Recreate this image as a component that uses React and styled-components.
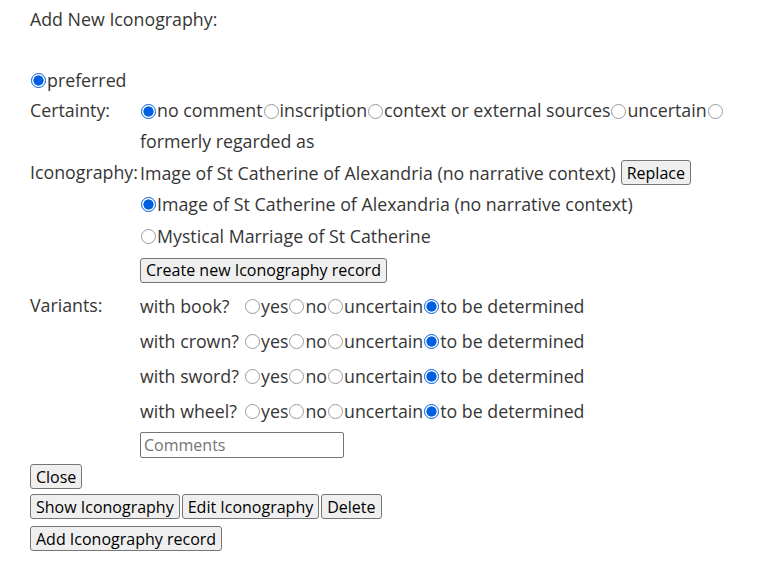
import React from 'react';
import styled, { createGlobalStyle } from 'styled-components';

const GlobalStyle = createGlobalStyle`
  body {
    margin: 0;
    background: #fff;
    font-family: 'Open Sans', 'Noto Sans', sans-serif;
    color: #363636;
  }
`;

const Page = styled.div`
  padding: 4px 0 0 30px;
  font-size: 17.8px;
`;

const Title = styled.div`
  line-height: 30px;
  margin-bottom: 30px;
`;

const Line = styled.div`
  display: flex;
  align-items: center;
  height: ${(p) => p.h || 31}px;
  white-space: nowrap;
`;

const Row = styled.div`
  display: flex;
  align-items: flex-start;
`;

const Label = styled.div`
  width: 110px;
  flex: none;
  line-height: ${(p) => p.h || 31}px;
`;

const Body = styled.div`
  display: flex;
  flex-direction: column;
`;

const Wrap = styled.div`
  display: flex;
  flex-wrap: wrap;
  align-items: center;
  line-height: 31px;
  max-width: 595px;
`;

const Option = styled.label`
  display: inline-flex;
  align-items: center;
  white-space: nowrap;
`;

const Radio = styled.input.attrs({ type: 'radio' })`
  appearance: none;
  -webkit-appearance: none;
  box-sizing: border-box;
  display: inline-block;
  width: 15px;
  height: 15px;
  min-width: 15px;
  margin: 1px 1px 0 1px;
  border-radius: 50%;
  border: 1px solid #9a9a9a;
  background: #fff;
  flex: none;
  &:checked {
    border: 1.5px solid #0060df;
    background: radial-gradient(circle, #0060df 0 4.8px, #fff 5.4px);
  }
`;

const Button = styled.button`
  font-family: 'Open Sans', 'Noto Sans', sans-serif;
  font-size: 16px;
  color: #000;
  background: #efefef;
  border: 1px solid #767676;
  border-radius: 3px;
  padding: 0 5px;
  height: 25px;
  line-height: 20px;
  margin: ${(p) => p.m || '0'};
`;

const VariantName = styled.span`
  display: inline-block;
  width: 104px;
`;

const TextInput = styled.input`
  width: 204px;
  height: 26px;
  box-sizing: border-box;
  border: 1px solid #767676;
  border-radius: 2px;
  padding: 0 3px;
  font-size: 16px;
  font-family: 'Open Sans', 'Noto Sans', sans-serif;
  &::placeholder {
    color: #757575;
  }
`;

const ButtonRow = styled.div`
  display: flex;
  gap: 2px;
  margin-top: ${(p) => p.mt || 5}px;
`;

const certainties = [
  'no comment',
  'inscription',
  'context or external sources',
  'uncertain',
];

const variants = ['book', 'crown', 'sword', 'wheel'];

function Variant({ name }) {
  return (
    <Line h={35}>
      <VariantName>with {name}?</VariantName>
      <Option><Radio name={name} />yes</Option>
      <Option><Radio name={name} />no</Option>
      <Option><Radio name={name} />uncertain</Option>
      <Option><Radio name={name} defaultChecked />to be determined</Option>
    </Line>
  );
}

export default function App() {
  return (
    <>
      <GlobalStyle />
      <Page>
        <Title>Add New Iconography:</Title>
        <Line>
          <Option><Radio name="pref" defaultChecked />preferred</Option>
        </Line>
        <Row>
          <Label>Certainty:</Label>
          <Wrap>
            {certainties.map((c, i) => (
              <Option key={c}><Radio name="cert" defaultChecked={i === 0} />{c}</Option>
            ))}
            <Option><Radio name="cert" /></Option>
            <span>formerly regarded as</span>
          </Wrap>
        </Row>
        <Row>
          <Label>Iconography:</Label>
          <Body>
            <Line>
              Image of St Catherine of Alexandria (no narrative context)
              <Button m="0 0 0 5px">Replace</Button>
            </Line>
            <Line h={32}>
              <Option><Radio name="icon" defaultChecked />Image of St Catherine of Alexandria (no narrative context)</Option>
            </Line>
            <Line h={32}>
              <Option><Radio name="icon" />Mystical Marriage of St Catherine</Option>
            </Line>
            <Line h={36}>
              <Button>Create new Iconography record</Button>
            </Line>
          </Body>
        </Row>
        <Row>
          <Label h={35}>Variants:</Label>
          <Body>
            {variants.map((v) => (
              <Variant key={v} name={v} />
            ))}
            <Line h={34}>
              <TextInput placeholder="Comments" />
            </Line>
          </Body>
        </Row>
        <ButtonRow mt={2}>
          <Button>Close</Button>
        </ButtonRow>
        <ButtonRow>
          <Button>Show Iconography</Button>
          <Button>Edit Iconography</Button>
          <Button>Delete</Button>
        </ButtonRow>
        <ButtonRow mt={7}>
          <Button>Add Iconography record</Button>
        </ButtonRow>
      </Page>
    </>
  );
}
